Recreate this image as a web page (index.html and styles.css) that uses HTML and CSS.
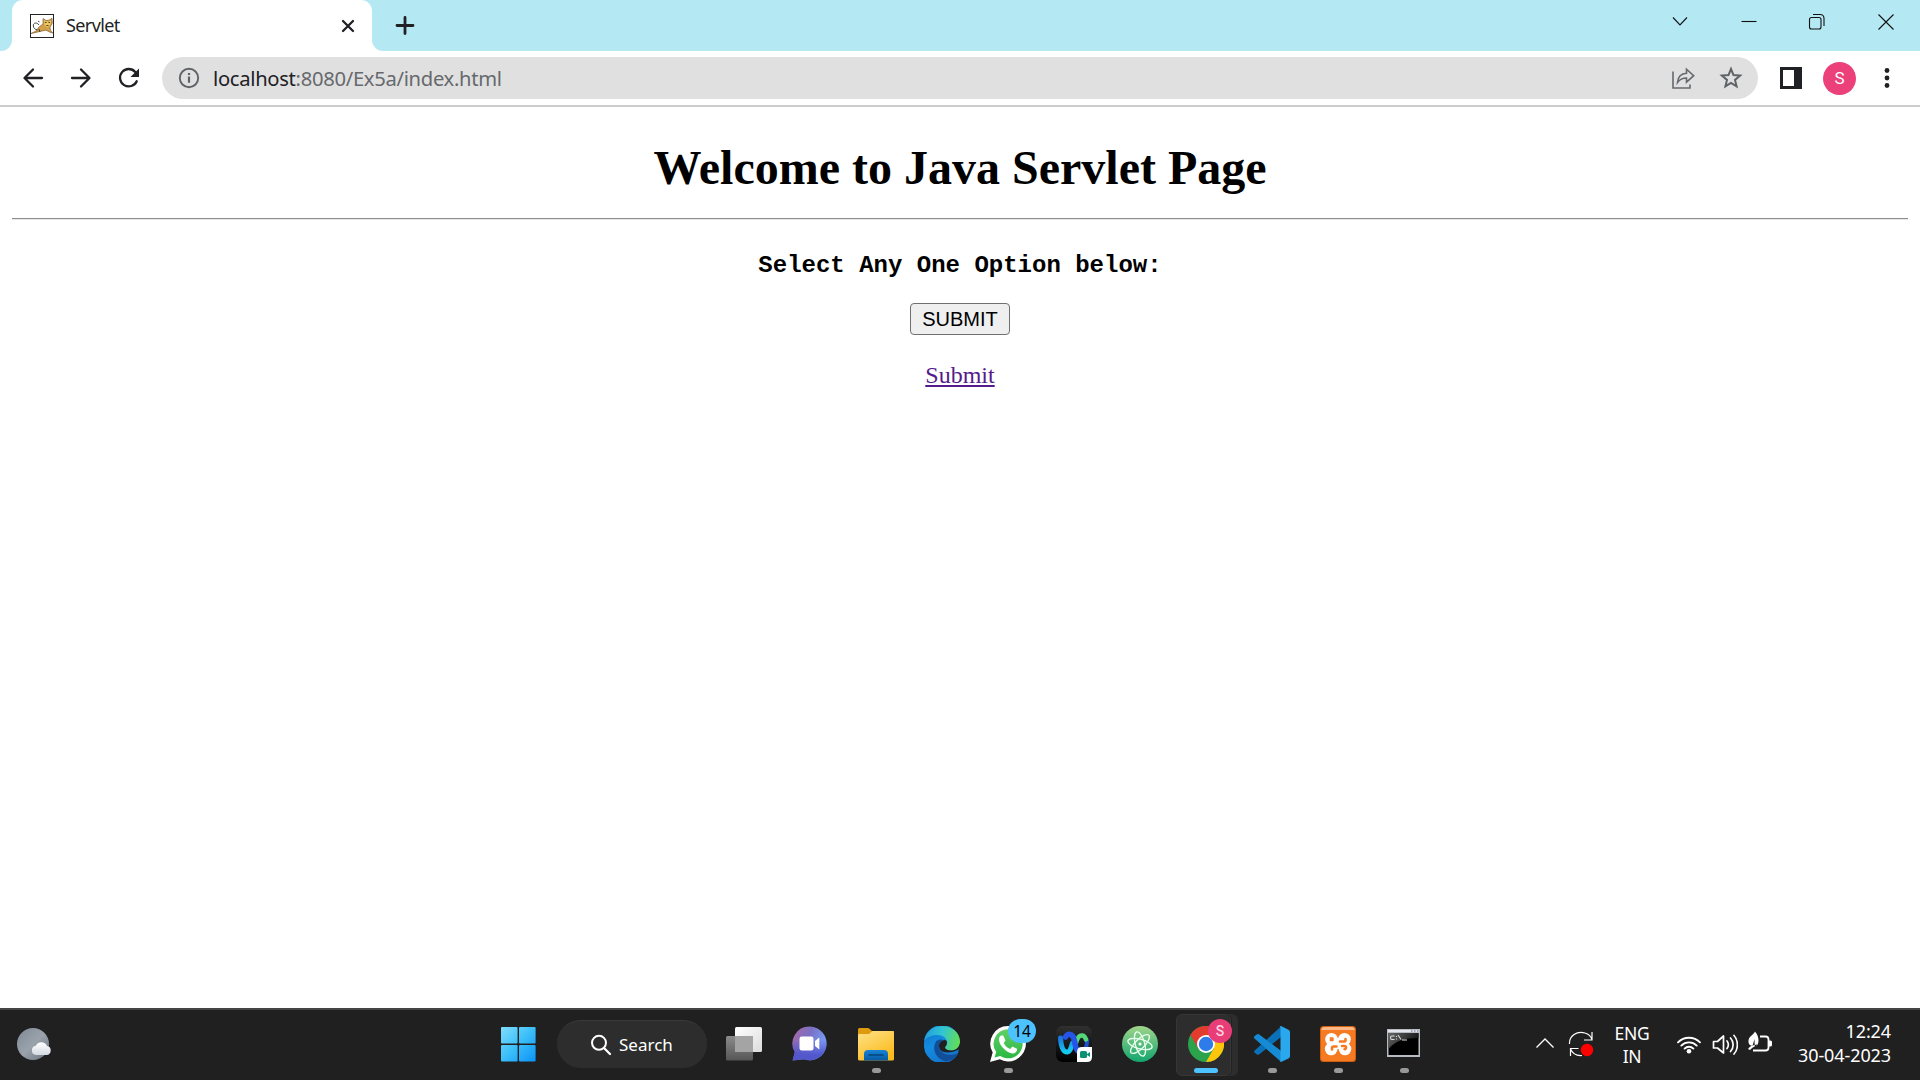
FILE: index.html
```html
<!DOCTYPE html>
<html lang="en">
<head>
<meta charset="utf-8">
<title>Servlet</title>
<link rel="stylesheet" href="styles.css">
</head>
<body>
<header class="tabstrip">
  <div class="tab-lead"></div>
  <div class="tab">
    <svg class="favicon" width="24" height="24" viewBox="0 0 24 24"><rect x=".5" y=".5" width="23" height="23" fill="#fff" stroke="#222"/><path d="M1 19.500l5-2.500 3-4 4-3 0-5.500 3 2 3-.3 3-2 .3 5-2.300 4 .5 3 2.500 3-3-1-4-2-5 1-4 1z" fill="#d2a04a" stroke="#755326" stroke-width=".6"/><path d="M14 6l2 1.500h3l2-1-.5 4-3 3-3-3z" fill="#edc85d"/><path d="M15 8.500h1.500M18.500 8.500H20M16.500 11.500h2" stroke="#443d2a"/><path d="M9 11C7 8 3 8.500 3.300 12c.2 2 1.700 3.500 4.200 4M8 7l1.500 1M9 15l1 3" fill="none" stroke="#333" stroke-width=".9"/></svg>
    <span class="tab-title">Servlet</span>
    <svg class="tab-close" width="14" height="14" viewBox="0 0 14 14"><path d="M2 2l10 10M12 2L2 12" stroke="#202124" stroke-width="2.300" stroke-linecap="round"/></svg>
  </div>
  <svg class="newtab" width="20" height="20" viewBox="0 0 20 20"><path d="M10 2v16M2 10h16" stroke="#202124" stroke-width="2.800" stroke-linecap="round"/></svg>
  <div class="window-controls">
    <svg width="18" height="18" viewBox="0 0 18 18"><path d="M2 4.500l7 7.500 7-7.500"/></svg>
    <svg width="18" height="18" viewBox="0 0 18 18"><path d="M1.500 8.500h15"/></svg>
    <svg width="18" height="18" viewBox="0 0 18 18"><rect x="1.500" y="4.500" width="11.500" height="11.500" rx="2"/><path d="M5 1.500h7q4 0 4 4v7.500"/></svg>
    <svg width="18" height="18" viewBox="0 0 18 18"><path d="M1.500 1.500l15 15M16.500 1.500l-15 15"/></svg>
  </div>
</header>
<nav class="toolbar">
  <div class="nav-buttons">
    <svg width="24" height="24" viewBox="0 0 24 24"><path d="M21 12H4M12 3.500L3.500 12l8.500 8.500"/></svg>
    <svg width="24" height="24" viewBox="0 0 24 24"><path d="M3 12h17M12 3.500l8.500 8.500-8.500 8.500"/></svg>
    <svg width="24" height="24" viewBox="0 0 24 24"><path d="M19.700 15.200A8.700 8.700 0 1 1 18.200 5.900L20 8"/><path d="M22 2.500v8.500h-8.500z" fill="#202124" stroke="none"/></svg>
  </div>
  <div class="address">
    <svg width="22" height="22" viewBox="0 0 22 22"><circle cx="11" cy="11" r="9.200" fill="none" stroke="#5f6368" stroke-width="1.900"/><path d="M11 9.500v6.300M11 5.900v2.200" stroke="#5f6368" stroke-width="2.200"/></svg>
    <span class="url"><b>localhost</b>:8080/Ex5a/index.html</span>
    <svg class="share" width="24" height="24" viewBox="0 0 24 24"><path d="M2 5.500V22h17v-3.500M6.500 16.500C7 10.500 10 7.500 15.500 7.200V3.200l7.200 6.500-7.200 6.500v-4.200c-4.500 0-6.500 1-9 4.500z" fill="none" stroke="#66696d" stroke-width="1.600"/></svg>
    <svg class="star" width="24" height="24" viewBox="0 0 24 24"><path d="M12 3l2.500 6.100 6.600.5-5.100 4.300 1.600 6.400-5.600-3.400-5.600 3.400L8 13.900 2.900 9.600l6.600-.5z" fill="none" stroke="#5f6368" stroke-width="2"/></svg>
  </div>
  <svg class="sidepanel" width="22" height="22" viewBox="0 0 22 22"><rect width="22" height="22" fill="#202124"/><rect x="3" y="3" width="11" height="16" fill="#fff"/></svg>
  <div class="avatar">S</div>
  <svg class="dots" width="6" height="22" viewBox="0 0 6 22"><g fill="#202124"><circle cx="3" cy="3.500" r="2.400"/><circle cx="3" cy="11" r="2.400"/><circle cx="3" cy="18.500" r="2.400"/></g></svg>
</nav>
<main class="page">
  <h1>Welcome to Java Servlet Page</h1>
  <hr>
  <p class="prompt">Select Any One Option below:</p>
  <button class="submit">SUBMIT</button>
  <a class="link" href="#">Submit</a>
</main>
<footer class="taskbar">
  <div class="weather">
    <svg width="36" height="36" viewBox="0 0 36 36"><defs><linearGradient id="moon" x2="1" y2="1"><stop stop-color="#7f8994"/><stop offset=".5" stop-color="#9aa3ac"/><stop offset="1" stop-color="#6b7580"/></linearGradient><linearGradient id="cloud" x2="0" y2="1"><stop stop-color="#fff"/><stop offset="1" stop-color="#d5dbe3"/></linearGradient></defs><circle cx="17" cy="18" r="16" fill="url(#moon)"/><path d="M20 29a4.700 4.700 0 0 1-.2-9.300 6.200 6.200 0 0 1 11.200.2 4.600 4.600 0 0 1-.5 9.100z" fill="url(#cloud)"/></svg>
  </div>
  <div class="cell">
    <svg width="36" height="36" viewBox="0 0 36 36"><defs><linearGradient id="win" gradientUnits="userSpaceOnUse" x1="0" y1="0" x2="36" y2="36"><stop stop-color="#85dfff"/><stop offset=".5" stop-color="#3cbff8"/><stop offset="1" stop-color="#0a91f8"/></linearGradient></defs><g fill="url(#win)"><rect x="1" y="1" width="16.600" height="16.600" rx="1"/><rect x="19" y="1" width="16.600" height="16.600" rx="1"/><rect x="1" y="19" width="16.600" height="16.600" rx="1"/><rect x="19" y="19" width="16.600" height="16.600" rx="1"/></g></svg>
  </div>
  <div class="search">
    <svg width="22" height="22" viewBox="0 0 22 22"><circle cx="9" cy="8.800" r="7" fill="none" stroke="#fff" stroke-width="2"/><path d="M14 14l6 6" stroke="#fff" stroke-width="2.300" stroke-linecap="round"/></svg>
    <span>Search</span>
  </div>
  <div class="cell">
    <svg width="36" height="36" viewBox="0 0 36 36"><defs><linearGradient id="tv" x2="1" y2="1"><stop stop-color="#fff"/><stop offset="1" stop-color="#dcdcdc"/></linearGradient><linearGradient id="tg" x2="0" y2="1"><stop stop-color="#8b8b8b"/><stop offset="1" stop-color="#565656"/></linearGradient></defs><rect x="9" y="1" width="27" height="25" rx="1.500" fill="url(#tv)"/><rect y="10" width="27" height="24.500" rx="1.500" fill="url(#tg)"/><path d="M9 10h18v16H9z" fill="#a4a4a4"/></svg>
  </div>
  <div class="cell">
    <svg width="36" height="36" viewBox="0 0 36 36"><defs><linearGradient id="chat" x1="0" y1=".2" x2=".8" y2=".6"><stop stop-color="#a668a8"/><stop offset=".5" stop-color="#7a70c4"/><stop offset="1" stop-color="#7896f0"/></linearGradient><linearGradient id="chat2" x2="0" y2="1"><stop offset=".4" stop-color="#4f52cf" stop-opacity="0"/><stop offset=".85" stop-color="#5257cc"/></linearGradient></defs><path d="M18 .5a16.900 16.900 0 1 1-6 32.800L.6 34.400 2.800 26A16.900 16.900 0 0 1 18 .5z" fill="url(#chat)"/><path d="M18 .5a16.900 16.900 0 1 1-6 32.800L.6 34.400 2.800 26A16.900 16.900 0 0 1 18 .5z" fill="url(#chat2)"/><rect x="7.500" y="10.500" width="14" height="14" rx="2.300" fill="#fff"/><path d="M23 15l4.300-3.500v12L23 20z" fill="#fff"/></svg>
  </div>
  <div class="cell running">
    <svg width="36" height="36" viewBox="0 0 36 36"><defs><linearGradient id="fold" x2=".6" y2="1"><stop stop-color="#ffe28a"/><stop offset="1" stop-color="#fbbb1c"/></linearGradient><linearGradient id="fb" x2="0" y2="1"><stop stop-color="#1784d6"/><stop offset="1" stop-color="#075aa2"/></linearGradient></defs><path d="M0 12V3.500Q0 2 1.500 2H9.500q1.200 0 2 .8L14 5h22v8z" fill="#dd9b0d"/><path d="M0 9q0-1 1.500-1H11l3.500-3H34.500q1.500 0 1.500 1.500V33q0 1.500-1.500 1.500h-33Q0 34.500 0 33z" fill="url(#fold)"/><path d="M6 34.500V28q0-4 4-4h16q4 0 4 4v6.500z" fill="url(#fb)"/><path d="M11 29h14" stroke="#06457b" stroke-width="1.500" stroke-linecap="round"/></svg>
  </div>
  <div class="cell">
    <svg width="36" height="36" viewBox="0 0 36 36"><defs><linearGradient id="e1" y1=".2" x2="1" y2=".4"><stop stop-color="#209bdd"/><stop offset=".5" stop-color="#32c5d3"/><stop offset="1" stop-color="#61dc57"/></linearGradient><linearGradient id="e2" x2=".6" y2="1"><stop stop-color="#1271c7"/><stop offset=".5" stop-color="#138be0"/><stop offset="1" stop-color="#1573c9"/></linearGradient></defs><path d="M0 17A18 18 0 0 1 36 17L34 27.500A18 18 0 0 1 0 18z" fill="url(#e2)"/><path d="M.2 15C1.500 6 8.500 0 18 0c10 0 18 7 18 15.500 0 5.500-3.500 9-9 9-4 0-6-1.500-6-3 0-1 2-2 2-5C23 12 19 9 13 9 7 9 2.500 11.500.2 15z" fill="url(#e1)"/><path d="M13 14.500C7.500 20 10 33 22.500 35.500 28 34.500 32 31 34 27c-7 4-19 1.500-19-7 0-2.500 1.500-5 4-6-2-.8-4-.6-6 .5z" fill="#114e99"/><path d="M15 20c0 6 8 9.500 21 3l0-6c-1 5-4.500 7.500-9 7.500-4 0-6-1.500-6-3 0-1 2-2 2-5 0-1.500-1-2.500-2-2.500-3.500 0-6 3-6 6z" fill="#202020"/></svg>
  </div>
  <div class="cell running">
    <svg width="36" height="36" viewBox="0 0 36 36"><defs><linearGradient id="wa" x2="0" y2="1"><stop stop-color="#61d167"/><stop offset="1" stop-color="#2cb742"/></linearGradient></defs><path d="M18.200 0A17.700 17.700 0 1 1 9.800 33.300L0 36l2.700-9.500A17.700 17.700 0 0 1 18.200 0z" fill="#fff"/><path d="M18.200 3.300a14.500 14.500 0 1 1-7.900 26.700l-5.700 1.500 1.600-5.500A14.500 14.500 0 0 1 18.200 3.300z" fill="url(#wa)"/><path d="M11 9.500h2.200l2.300 5-1.800 2.400c1.500 3 3.500 4.800 6.600 6l2-2.500 4.700 2.300c.4 2.800-2 4.800-4.500 4.800C17 27 9 19.500 9 13.500c0-2 .8-3.300 2-4z" fill="#fff"/></svg>
    <span class="badge count">14</span>
  </div>
  <div class="cell">
    <svg width="36" height="36" viewBox="0 0 36 36"><defs><linearGradient id="wx" x2="0" y2="1"><stop stop-color="#303030"/><stop offset="1"/></linearGradient><linearGradient id="wc" x2=".2" y2="1"><stop stop-color="#1b75e0"/><stop offset="1" stop-color="#14c8ed"/></linearGradient></defs><rect width="36" height="36" rx="6.500" fill="url(#wx)"/><g fill="none" stroke-linecap="round"><path d="M31 14c0 7-2 11.500-6 11.500" stroke="#204ed0" stroke-width="4"/><path d="M20 17c1.500-6 4-8 6.500-7.500 2 .4 2.800 2 3.500 4" stroke="#53d879" stroke-width="4.500"/><path d="M4.500 12c.5 7 2 14 6.500 14 3 0 4-4 5.500-9" stroke="url(#wc)" stroke-width="5"/><path d="M9.500 11c2.500-4 7-3.500 8.500 2 1.300 4.500 1.500 11.500 5 12.500" stroke="#2454e8" stroke-width="5.500"/></g><path d="M21 26q0-5 5-5h10v10q0 5-5 5H21z" fill="#fff"/><rect x="24" y="25" width="7" height="7" rx="1.500" fill="#0b9174"/><path d="M31 28l3-2v5l-3-2z" fill="#0b9174"/></svg>
  </div>
  <div class="cell">
    <svg width="36" height="36" viewBox="0 0 36 36"><defs><linearGradient id="atom" x2="0" y2="1"><stop stop-color="#a0d58a"/><stop offset="1" stop-color="#12a56e"/></linearGradient></defs><circle cx="18" cy="18" r="18" fill="url(#atom)"/><g fill="none" stroke="#e9fff0" stroke-width="1.300"><ellipse cx="18" cy="18" rx="12.500" ry="4.700" transform="rotate(15 18 18)"/><ellipse cx="18" cy="18" rx="12.500" ry="4.700" transform="rotate(75 18 18)"/><ellipse cx="18" cy="18" rx="12.500" ry="4.700" transform="rotate(135 18 18)"/></g><circle cx="18" cy="18" r="1.600" fill="#fff"/></svg>
  </div>
  <div class="cell active">
    <svg width="36" height="36" viewBox="0 0 36 36"><circle cx="18" cy="18" r="18" fill="#2ba24c"/><path d="M2.400 9A18 18 0 0 1 33.600 9H18l-7.800 13.500z" fill="#e33b2e"/><path d="M18 9h15.600A18 18 0 0 1 18 36l7.800-13.500z" fill="#fdc60a"/><circle cx="18" cy="18" r="9" fill="#fff"/><circle cx="18" cy="18" r="7.200" fill="#2e7bea"/></svg>
    <span class="badge profile">S</span>
  </div>
  <div class="cell running">
    <svg width="36" height="36" viewBox="0 0 36 36"><path d="M.7 12.500q-1.200-1.200 0-2.200L3 8.500q1-.7 2 0L27 25v10.500z" fill="#168bd3"/><path d="M.7 24.500q-1.200 1.200 0 2.200L3 28.500q1 .7 2 0L27 11V.5z" fill="#0a71b8"/><path d="M.7 12.500q-1.200-1.200 0-2.200L3 8.500q1-.7 2 0L27 25v10.500z" fill="#168bd3"/><path d="M25.500.4Q26.500-.2 28 .5l6.500 3.200Q36 4.500 36 6v24q0 1.700-1.500 2.500L28 35.600q-1.500.6-2.500-.2 1 .2 1-1.200V1.800q0-1.300-1-1.400z" fill="#2ba7ed"/></svg>
  </div>
  <div class="cell running">
    <svg width="36" height="36" viewBox="0 0 36 36"><rect width="36" height="36" rx="3.500" fill="#cf5f10"/><rect x="1" y="1" width="34" height="34" rx="3" fill="#f57a22"/><path d="M4 1h28q2 0 3 3H1q1-3 3-3z" fill="#fbb987"/><g fill="#fff"><circle cx="11.500" cy="13.200" r="6.300"/><circle cx="24.500" cy="13.200" r="6.300"/><circle cx="11.200" cy="23" r="6.300"/><circle cx="25" cy="23" r="6.300"/><path d="M11 12h14v11H11z"/></g><g fill="none" stroke="#f57a22" stroke-width="2.600" stroke-linecap="round"><path d="M12.500 12.500h-1.500v1.500h1.500M12 23.500v-1.500q0-1.500 1.500-1.500h3M20 15.500h4.500q1 0 1-1.500v-1M22 20h2.500q1.500 0 1.500 1.500t-1.500 1.700"/></g></svg>
  </div>
  <div class="cell running">
    <svg width="36" height="36" viewBox="0 0 36 36"><defs><linearGradient id="cmd" x2="1" y2=".4"><stop stop-color="#666"/><stop offset="1" stop-color="#151515"/></linearGradient></defs><rect x="1" y="3" width="33" height="28" fill="#b7bcc3"/><path d="M2 4h31v2H2z" fill="#e4e8ee"/><path d="M25 5h1.500M28 5h1.500M31 5h1.500" stroke="#536078"/><rect x="2.500" y="7" width="30" height="22" fill="#000"/><path d="M2.500 7h30v5C18 12 9 15 2.500 23z" fill="url(#cmd)"/><path d="M8.500 10H6q-1.500 0-1.500 1.700T6 13.500h2.500M10.500 10v1M10.500 12.500v1M12 9l3 4.500M16 14h5" fill="none" stroke="#ddd" stroke-width="1.100"/></svg>
  </div>
  <div class="tray">
    <svg class="up" width="20" height="12" viewBox="0 0 20 12"><path d="M1.500 10.500L10 2l8.500 8.500" fill="none" stroke="#fff" stroke-width="1.300"/></svg>
    <svg class="sync" width="26" height="26" viewBox="0 0 26 26"><path d="M1.500 13C1 5 9-.5 17 2c3.500 1 6 3.500 7 6.500M24 1v8h-8M2.500 25v-7.500h8M2.500 18c2 4.500 6 7 11.500 6.500" fill="none" stroke="#fff" stroke-width="1.200"/><circle cx="19" cy="19" r="6.200" fill="#f00"/></svg>
    <div class="language">ENG<br>IN</div>
    <svg class="wifi" width="26" height="22" viewBox="0 0 26 22"><g fill="none" stroke="#fff" stroke-width="1.900" stroke-linecap="round"><path d="M2 9.300a15.500 15.500 0 0 1 22 0M5.300 12.600a10.900 10.900 0 0 1 15.400 0M8.600 15.600a6.200 6.200 0 0 1 8.800 0"/></g><circle cx="13" cy="18.300" r="2.300" fill="#fff"/></svg>
    <svg class="volume" width="26" height="24" viewBox="0 0 26 24"><g fill="none" stroke="#fff" stroke-width="1.700" stroke-linejoin="round" stroke-linecap="round"><path d="M1.500 8.500h4L11.500 3v17l-6-5h-4zM15 8c1.800 2 1.800 5.500 0 7.500M18.500 5c3.500 3.700 3.500 9.700 0 13.500M22 2.500c4.500 5 4.500 13.500 0 18.500"/></g></svg>
    <svg class="battery" width="26" height="24" viewBox="0 0 26 24"><path d="M13 5.500h5.500q3 0 3 3v8q0 3-3 3H6" fill="none" stroke="#fff" stroke-width="1.800"/><path d="M22 9.500h1.500q1.500 0 1.500 1.500v3q0 1.500-1.500 1.500H22z" fill="#fff"/><path d="M8 .5c-1 3-6 4.500-6.500 9-.3 3.500 1.500 5 4 5.500l2-7 .2 7.500C12.500 15 13 6 8 .5zM1 18c2-3 5-4 9-4.500v1.200c-3 .8-5 1.800-7 4.300z" fill="#fff"/></svg>
    <div class="clock">12:24<br>30-04-2023</div>
  </div>
</footer>
</body>
</html>
```
FILE: styles.css
```css
* { box-sizing: border-box; }
body {
  margin: 0;
  width: 1920px;
  height: 1080px;
  display: flex;
  flex-direction: column;
  overflow: hidden;
  background: #fff;
  font-family: "Noto Sans", sans-serif;
}
svg { display: block; flex: none; }

/* Tab strip */
.tabstrip {
  flex: 0 0 51px;
  display: flex;
  align-items: flex-start;
  background: linear-gradient(#fff, #fff) 0 100% / 384px 12px no-repeat, #b4e8f3;
}
.tab-lead { width: 12px; height: 51px; background: #b4e8f3; border-bottom-right-radius: 11px; }
.tab {
  width: 360px;
  height: 51px;
  display: flex;
  align-items: center;
  padding: 1px 17px 0 18px;
  background: #fff;
  border-radius: 11px 11px 0 0;
}
.tab-title { margin-left: 12px; font-size: 18px; letter-spacing: -.6px; color: #222; line-height: 24px; padding-bottom: 2px; }
.tab-close { margin-left: auto; }
.newtab { height: 51px; width: 66px; padding: 0 23px; background: #b4e8f3; border-bottom-left-radius: 11px; }
.window-controls { margin: 13px 25px 0 auto; display: flex; gap: 50.700px; }
.window-controls svg { fill: none; stroke: #111; stroke-width: 1.100px; }

/* Toolbar */
.toolbar {
  flex: 0 0 56px;
  display: flex;
  align-items: center;
  padding: 0 30px 0 21px;
  border-bottom: 2px solid #ccc;
}
.nav-buttons { display: flex; gap: 24px; width: 141px; }
.nav-buttons svg { fill: none; stroke: #202124; stroke-width: 2.300px; stroke-linecap: round; stroke-linejoin: round; }
.address {
  width: 1596px;
  height: 42px;
  display: flex;
  align-items: center;
  padding: 0 15px 0 16px;
  border-radius: 21px;
  background: #e0e0e0;
}
.url { margin-left: 13px; font-size: 20.200px; line-height: 30px; letter-spacing: -.3px; color: #66696d; white-space: nowrap; }
.url b { font-weight: 400; color: #202124; }
.share { margin-left: auto; }
.star { margin-left: 24px; }
.sidepanel { margin-left: 22px; }
.avatar {
  width: 33px;
  height: 33px;
  margin-left: 21px;
  border-radius: 50%;
  background: #ec407a;
  color: #fff;
  font: 17px/33px Roboto, sans-serif;
  text-align: center;
}
.dots { margin-left: auto; }

/* Document */
.page {
  flex: 1;
  display: flex;
  flex-direction: column;
  align-items: center;
  padding: 33px 12px 0;
  color: #000;
  font: 24px/27px "Liberation Serif", serif;
}
.page h1 { margin: 0; font-size: 48px; line-height: 55px; }
.page hr { width: 100%; height: 2px; margin: 23px 0 0; border: 0; border-top: 1px solid #8e8e8e; border-bottom: 1px solid #e7e7e7; }
.prompt { margin: 32px 0 0; font: bold 24px/27px "Liberation Mono", monospace; }
.submit {
  width: 100px;
  height: 32px;
  margin: 24px 0 0;
  padding: 0;
  border: 1px solid #707070;
  border-radius: 4px;
  background: #efefef;
  color: #000;
  font: 20px/28px "Liberation Sans", sans-serif;
}
.link { margin-top: 27px; color: #551a8b; text-decoration: underline; }

/* Taskbar */
.taskbar {
  flex: 0 0 72px;
  display: flex;
  border-top: 2px solid #454545;
  background: #202020;
  color: #fff;
}
.weather { width: 485px; padding: 16px; }
.cell { position: relative; width: 66px; height: 70px; padding: 16px 15px; }
.search {
  width: 150px;
  height: 48px;
  display: flex;
  gap: 7px;
  align-items: center;
  margin: 10px 4px 0 6px;
  padding-left: 33px;
  border-top: 1px solid #3a3a3a;
  border-radius: 24px;
  background: #2d2d2d;
  font-size: 17px;
}
.running::after, .active::after {
  content: "";
  position: absolute;
  left: 29px;
  bottom: 7px;
  width: 9px;
  height: 5px;
  border-radius: 3px;
  background: #999;
}
.active::before {
  content: "";
  position: absolute;
  left: 3px;
  top: 4px;
  width: 53px;
  height: 60px;
  border: 1px solid #363636;
  border-radius: 6px;
  background: #2d2d2d;
  box-shadow: 1px 0 0 0 #222, 7px 0 0 0 #2d2d2d;
}
.active svg { position: relative; }
.active::after { left: 21px; width: 24px; background: #4cc2ff; }
.badge { position: absolute; top: 9px; height: 24px; text-align: center; line-height: 24px; border-radius: 12px; }
.count { left: 33px; width: 28px; background: #4cc2ff; color: #000; font-size: 15.500px; }
.profile { left: 35px; width: 24px; background: #e93d78; color: #ffd3e0; font: 500 14px/24px Roboto, sans-serif; }
.tray {
  flex: 1;
  display: flex;
  align-items: flex-start;
  padding: 15px 29px 0 98px;
  font-size: 18px;
  line-height: 24px;
}
.tray .up { margin-top: 12px; }
.tray .sync { margin: 6px 0 0 13px; }
.tray .wifi { margin: 8px 0 0 26px; }
.tray .volume { margin: 8px 0 0 10px; }
.tray .battery { margin: 6px 0 0 9px; }
.language { width: 36px; margin: -3px 0 0 20px; text-align: center; line-height: 23px; font-size: 17.500px; letter-spacing: -.3px; }
.clock { margin: -6px 0 0 auto; text-align: right; letter-spacing: -.1px; }
```
